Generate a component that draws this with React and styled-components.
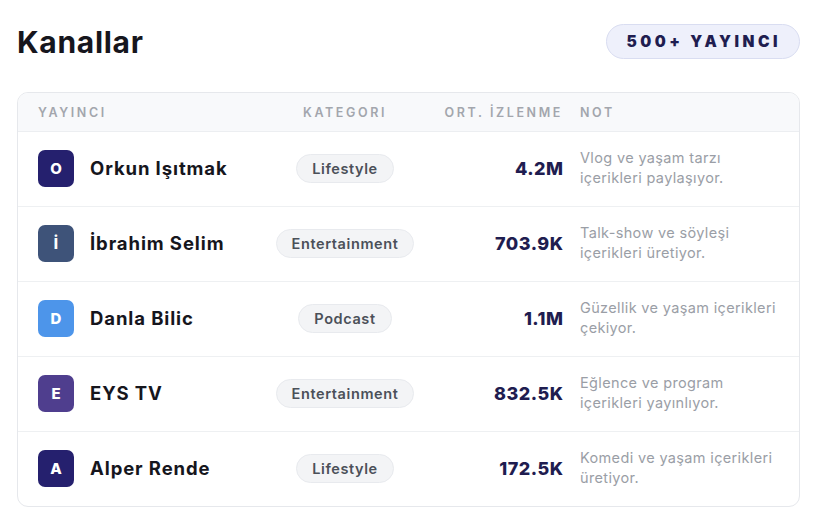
import React from "react";
import styled, { createGlobalStyle } from "styled-components";

const Global = createGlobalStyle`
  html, body { margin: 0; padding: 0; background: #ffffff; }
  body { font-family: Inter, "Noto Sans", sans-serif; -webkit-font-smoothing: antialiased; }
`;

const Page = styled.div`
  padding: 24px 16px 18px 17px;
  width: 816px;
  box-sizing: border-box;
`;

const TopBar = styled.div`
  display: flex;
  align-items: center;
  justify-content: space-between;
  height: 35px;
`;

const Title = styled.h1`
  margin: 0;
  font-size: 30px;
  font-weight: 700;
  color: #16161d;
  letter-spacing: 0.7px;
`;

const Badge = styled.div`
  height: 35px;
  box-sizing: border-box;
  padding: 0 18px 0 19px;
  display: flex;
  align-items: center;
  border-radius: 18px;
  background: #eef0fb;
  border: 1.5px solid #d9ddf1;
  color: #1f1d50;
  font-size: 15.5px;
  font-weight: 900;
  letter-spacing: 3.5px;
`;

const Card = styled.div`
  margin-top: 33px;
  border: 1.5px solid #e6e8ec;
  border-radius: 11px;
  overflow: hidden;
  box-sizing: border-box;
`;

const Grid = styled.div`
  display: grid;
  grid-template-columns: 215px 150px 126px 200px;
  column-gap: 17px;
  align-items: center;
  padding: 0 20px 0 20px;
`;

const HeadRow = styled(Grid)`
  height: 38px;
  background: #f8f9fb;
  border-bottom: 1.5px solid #eceef1;
`;

const HeadCell = styled.div`
  font-size: 12.5px;
  font-weight: 600;
  color: #a3a6ad;
  letter-spacing: 2.6px;
  text-align: ${(p) => p.$align || "left"};
`;

const Row = styled(Grid)`
  height: 72px;
  padding-bottom: 2px;
  border-bottom: ${(p) => (p.$last ? "none" : "1.5px solid #eef0f2")};
`;

const Channel = styled.div`
  display: flex;
  align-items: center;
  gap: 16px;
`;

const Avatar = styled.div`
  width: 36px;
  height: 37px;
  border-radius: 7px;
  background: ${(p) => p.$bg};
  color: #ffffff;
  font-size: 15px;
  font-weight: 800;
  display: flex;
  align-items: center;
  justify-content: center;
`;

const Name = styled.div`
  font-size: 18.5px;
  font-weight: 700;
  color: #16161d;
  letter-spacing: 0.9px;
`;

const CatCell = styled.div`
  display: flex;
  justify-content: center;
`;

const Pill = styled.div`
  height: 29px;
  box-sizing: border-box;
  padding: 0 15px;
  display: flex;
  align-items: center;
  border-radius: 15px;
  background: #f3f4f6;
  border: 1.5px solid #e8eaee;
  color: #4b5059;
  font-size: 14.5px;
  font-weight: 600;
  letter-spacing: 0.6px;
`;

const Views = styled.div`
  text-align: right;
  font-size: 18px;
  font-weight: 800;
  color: #1f1d50;
  letter-spacing: 0.5px;
  margin-right: -0.5px;
`;

const Note = styled.div`
  font-size: 14.5px;
  line-height: 20px;
  color: #9a9ea6;
  letter-spacing: 0.35px;
  padding-right: 4px;
`;

const rows = [
  { l: "O", bg: "#25206e", name: "Orkun Işıtmak", cat: "Lifestyle", v: "4.2M", note: "Vlog ve yaşam tarzı içerikleri paylaşıyor." },
  { l: "İ", bg: "#3e5379", name: "İbrahim Selim", cat: "Entertainment", v: "703.9K", note: "Talk-show ve söyleşi içerikleri üretiyor." },
  { l: "D", bg: "#4d95ea", name: "Danla Bilic", cat: "Podcast", v: "1.1M", note: "Güzellik ve yaşam içerikleri çekiyor." },
  { l: "E", bg: "#4f3e8e", name: "EYS TV", cat: "Entertainment", v: "832.5K", note: "Eğlence ve program içerikleri yayınlıyor." },
  { l: "A", bg: "#25206e", name: "Alper Rende", cat: "Lifestyle", v: "172.5K", note: "Komedi ve yaşam içerikleri üretiyor." },
];

export default function App() {
  return (
    <Page>
      <Global />
      <TopBar>
        <Title>Kanallar</Title>
        <Badge>500+ YAYINCI</Badge>
      </TopBar>
      <Card>
        <HeadRow>
          <HeadCell>YAYINCI</HeadCell>
          <HeadCell $align="center">KATEGORI</HeadCell>
          <HeadCell $align="right">ORT. İZLENME</HeadCell>
          <HeadCell>NOT</HeadCell>
        </HeadRow>
        {rows.map((r, i) => (
          <Row key={r.name} $last={i === rows.length - 1}>
            <Channel>
              <Avatar $bg={r.bg}>{r.l}</Avatar>
              <Name>{r.name}</Name>
            </Channel>
            <CatCell>
              <Pill>{r.cat}</Pill>
            </CatCell>
            <Views>{r.v}</Views>
            <Note>{r.note}</Note>
          </Row>
        ))}
      </Card>
    </Page>
  );
}
